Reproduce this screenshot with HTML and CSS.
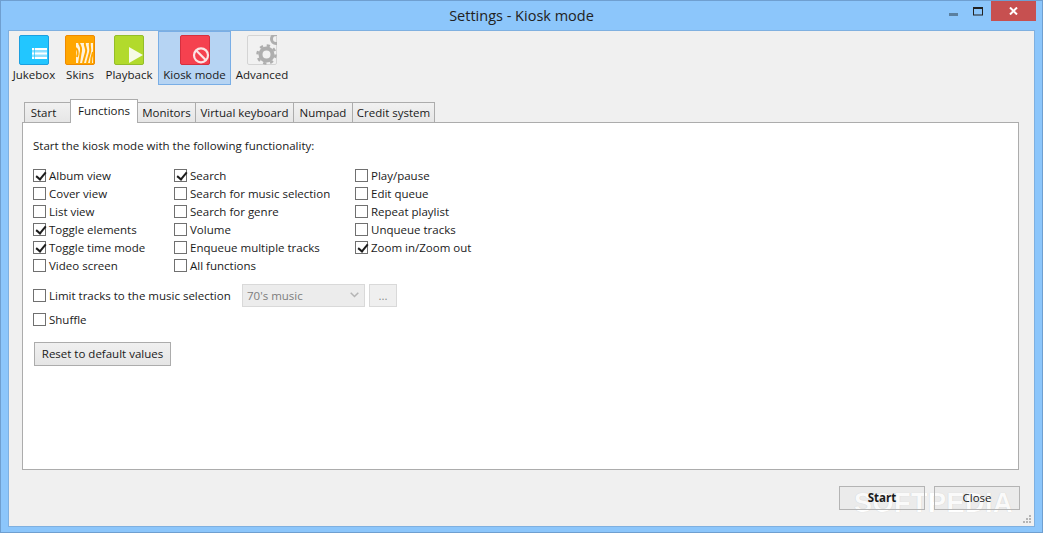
FILE: index.html
```html
<!DOCTYPE html>
<html lang="en">
<head>
<meta charset="utf-8">
<title>Settings - Kiosk mode</title>
<link rel="stylesheet" href="styles.css">
</head>
<body>
<div class="window">
  <header class="titlebar">
    <div class="title">Settings - Kiosk mode</div>
    <div class="controls">
      <svg class="ctl-min" width="9" height="3" viewBox="0 0 9 3"><rect width="9" height="3" fill="#5a7f9f"/></svg>
      <svg class="ctl-max" width="10" height="9" viewBox="0 0 10 9"><rect x=".5" y=".5" width="9" height="7.5" fill="none" stroke="#222"/><rect width="10" height="2" fill="#222"/></svg>
      <div class="ctl-close"><svg width="9" height="8" viewBox="0 0 9 8"><path d="M1 .5l7 7M8 .5l-7 7" stroke="#fff" stroke-width="2" fill="none"/></svg></div>
    </div>
  </header>
  <div class="client">
    <nav class="toolbar">
      <div class="tool t-jukebox">
        <svg class="icon" width="30" height="30" viewBox="0 0 30 30"><rect x=".5" y=".5" width="29" height="29" rx="1.500" fill="#22c6ff" stroke="#1b9fe0"/><rect x="13" y="13" width="15" height="11" fill="#8fe0ff"/><path d="M13 14h15M13 18.500h15M13 23h15" stroke="#fff" stroke-width="2"/><path d="M15.500 13v11" stroke="#22c6ff" stroke-width="1" opacity=".7"/></svg>
        <span>Jukebox</span>
      </div>
      <div class="tool t-skins">
        <svg class="icon" width="30" height="30" viewBox="0 0 30 30"><rect x=".5" y=".5" width="29" height="29" rx="1.500" fill="#ffa600" stroke="#ef8a00"/><rect x="11" y="8" width="17" height="20" fill="#fff3dc"/><path d="M14 8c1 3 3 4 2 8s-1 8-2 12M20 8c-1 3 2 5 1 9s-2 7-3 11M25 8c-1 3 1 5 0 9s-2 7-3 11M11 13c2 2 2 6 1 9M28 17c-1 3-2 7-2 11" fill="none" stroke="#ffa600" stroke-width="2"/></svg>
        <span>Skins</span>
      </div>
      <div class="tool t-playback">
        <svg class="icon" width="30" height="30" viewBox="0 0 30 30"><rect x=".5" y=".5" width="29" height="29" rx="1.500" fill="#b2da2c" stroke="#94bd2a"/><path d="M15 12l14 8-14 8z" fill="#f6fbe4"/></svg>
        <span>Playback</span>
      </div>
      <div class="tool t-kiosk">
        <svg class="icon" width="30" height="30" viewBox="0 0 30 30"><rect x=".5" y=".5" width="29" height="29" rx="1.500" fill="#f5414f" stroke="#d5303f"/><circle cx="21" cy="20.300" r="7" fill="none" stroke="#fbe4e4" stroke-width="2.200"/><path d="M16 15.300l10 10" stroke="#fbe4e4" stroke-width="2.200"/></svg>
        <span>Kiosk mode</span>
      </div>
      <div class="tool t-advanced">
        <svg class="icon" width="30" height="30" viewBox="0 0 30 30"><rect x=".5" y=".5" width="29" height="29" rx="1.500" fill="#f1f1f1" stroke="#d4d4d4"/><circle cx="19.500" cy="19.500" r="6" fill="none" stroke="#aeaeae" stroke-width="4"/><circle cx="19.500" cy="19.500" r="9" fill="none" stroke="#aeaeae" stroke-width="2.500" stroke-dasharray="3.300 3.760"/><circle cx="29" cy="4" r="4.500" fill="none" stroke="#aeaeae" stroke-width="3"/></svg>
        <span>Advanced</span>
      </div>
    </nav>
    <div class="tabs">
      <div class="tab tab-start">Start</div>
      <div class="tab tab-active">Functions</div>
      <div class="tab tab-monitors">Monitors</div>
      <div class="tab tab-vk">Virtual keyboard</div>
      <div class="tab tab-numpad">Numpad</div>
      <div class="tab tab-credit">Credit system</div>
    </div>
    <main class="panel">
      <p class="intro">Start the kiosk mode with the following functionality:</p>
      <div class="options">
        <div class="col col-1">
          <label class="check"><i class="box on"></i>Album view</label>
          <label class="check"><i class="box"></i>Cover view</label>
          <label class="check"><i class="box"></i>List view</label>
          <label class="check"><i class="box on"></i>Toggle elements</label>
          <label class="check"><i class="box on"></i>Toggle time mode</label>
          <label class="check"><i class="box"></i>Video screen</label>
        </div>
        <div class="col col-2">
          <label class="check"><i class="box on"></i>Search</label>
          <label class="check"><i class="box"></i>Search for music selection</label>
          <label class="check"><i class="box"></i>Search for genre</label>
          <label class="check"><i class="box"></i>Volume</label>
          <label class="check"><i class="box"></i>Enqueue multiple tracks</label>
          <label class="check"><i class="box"></i>All functions</label>
        </div>
        <div class="col col-3">
          <label class="check"><i class="box"></i>Play/pause</label>
          <label class="check"><i class="box"></i>Edit queue</label>
          <label class="check"><i class="box"></i>Repeat playlist</label>
          <label class="check"><i class="box"></i>Unqueue tracks</label>
          <label class="check"><i class="box on"></i>Zoom in/Zoom out</label>
        </div>
      </div>
      <div class="limit">
        <label class="check limit-check"><i class="box"></i>Limit tracks to the music selection</label>
        <div class="combo"><span>70's music</span><svg width="9" height="6" viewBox="0 0 9 6"><path d="M.7.7l3.800 3.800L8.300.7" fill="none" stroke="#b4b4b4" stroke-width="1.500"/></svg></div>
        <div class="dots">...</div>
      </div>
      <label class="check shuffle"><i class="box"></i>Shuffle</label>
      <div class="btn reset">Reset to default values</div>
    </main>
    <footer class="footer">
      <div class="watermark">SOFTPEDIA</div>
      <div class="btn foot-btn start">Start</div>
      <div class="btn foot-btn">Close</div>
      <svg class="grip" width="9" height="9" viewBox="0 0 9 9"><path d="M6 0h2v2H6zM3 3h2v2H3zM6 3h2v2H6zM0 6h2v2H0zM3 6h2v2H3zM6 6h2v2H6z" fill="#b5b5b5"/></svg>
    </footer>
  </div>
</div>
</body>
</html>
```
FILE: styles.css
```css
* { box-sizing: border-box; }
html, body { margin: 0; height: 100%; overflow: hidden; }
body {
  font-family: "Open Sans", "Liberation Sans", sans-serif;
  font-size: 11.5px;
  color: #1a1a1a;
}
.window {
  width: 1043px;
  height: 533px;
  background: #8cc6fb;
  border: 1px solid #6f9fd0;
  display: flex;
  flex-direction: column;
  padding: 0 7px 5px;
}
.titlebar {
  height: 29px;
  position: relative;
  flex: none;
}
.title {
  text-align: center;
  font-size: 14.500px;
  line-height: 29px;
  color: #222;
}
.controls {
  position: absolute;
  right: -1px;
  top: 0;
  height: 20px;
  display: flex;
  align-items: flex-start;
}
.ctl-min { margin-top: 12px; margin-right: 15px; }
.ctl-max { margin-top: 6px; margin-right: 8px; }
.ctl-close {
  width: 45px;
  height: 20px;
  background: #c75050;
  display: flex;
  align-items: center;
  justify-content: center;
}
.client {
  flex: 1;
  background: #f0f0f0;
  border: 1px solid #7fb0e0;
  display: flex;
  flex-direction: column;
  min-height: 0;
}
.toolbar {
  display: flex;
  height: 54px;
  flex: none;
}
.tool {
  display: flex;
  flex-direction: column;
  align-items: center;
  padding-top: 4px;
  height: 54px;
  white-space: nowrap;
}
.tool span { margin-top: 1px; line-height: 17px; }
.tool .icon { display: block; }
.t-jukebox { margin-left: 3px; width: 44px; }
.t-skins { margin-left: 7px; width: 34px; }
.t-playback { margin-left: 7px; width: 50px; }
.t-kiosk { margin-left: 4px; width: 73px; background: #b6d4f3; border: 1px solid #79aee6; padding-top: 3px; }
.t-advanced { margin-left: 2px; width: 58px; }
.tabs {
  display: flex;
  align-items: flex-end;
  height: 38px;
  flex: none;
  padding-left: 15px;
  position: relative;
  z-index: 1;
  margin-bottom: -1px;
}
.tab {
  height: 21px;
  line-height: 20px;
  background: linear-gradient(#f1f1f1, #e6e6e6);
  border: 1px solid #acacac;
  border-left: 0;
  text-align: center;
}
.tab-start { width: 47px; border-left: 1px solid #acacac; padding-right: 8px; }
.tab-active {
  width: 68px;
  height: 24px;
  line-height: 21px;
  background: #fff;
  border-left: 1px solid #acacac;
  border-bottom: 0;
  margin-left: -1px;
}
.tab-monitors { width: 58px; }
.tab-vk { width: 98px; }
.tab-numpad { width: 59px; }
.tab-credit { width: 82px; }
.panel {
  margin: 0 15px 0 13px;
  height: 348px;
  flex: none;
  background: #fff;
  border: 1px solid #acacac;
  padding: 14px 10px 0;
}
.intro { margin: 0; line-height: 17px; }
.options {
  display: flex;
  margin-top: 12px;
}
.col { display: flex; flex-direction: column; }
.col-1 { width: 141px; }
.col-2 { width: 181px; }
.check {
  display: flex;
  align-items: center;
  height: 18px;
  white-space: nowrap;
}
.box {
  display: block;
  width: 13px;
  height: 13px;
  margin-right: 3px;
  border: 1px solid #707070;
  background: #fff;
  flex: none;
  position: relative;
}
.box.on::after {
  content: "";
  position: absolute;
  left: 3.500px;
  top: .5px;
  width: 4px;
  height: 8px;
  border: solid #1c1c1c;
  border-width: 0 2px 2px 0;
  transform: rotate(40deg);
}
.limit {
  display: flex;
  align-items: center;
  margin-top: 9px;
  height: 24px;
}
.limit-check { width: 209px; }
.combo {
  width: 123px;
  height: 23px;
  background: #ececec;
  border: 1px solid #d9d9d9;
  color: #7d7d7d;
  display: flex;
  align-items: center;
  justify-content: space-between;
  padding: 0 5px 0 4px;
}
.dots {
  width: 28px;
  height: 23px;
  margin-left: 4px;
  background: #efefef;
  border: 1px solid #d9d9d9;
  color: #8a8a8a;
  text-align: center;
  line-height: 22px;
}
.shuffle { margin-top: 3px; }
.btn {
  border: 1px solid #acacac;
  background: linear-gradient(#f0f0f0, #e5e5e5);
  text-align: center;
}
.reset {
  width: 137px;
  height: 24px;
  line-height: 22px;
  margin: 14px 0 0 1px;
}
.footer {
  flex: 1;
  display: flex;
  justify-content: flex-end;
  align-items: flex-start;
  gap: 9px;
  padding: 16px 14px 0 0;
  position: relative;
}
.foot-btn {
  width: 86px;
  height: 24px;
  line-height: 22px;
  background: rgba(0, 0, 0, .02);
  border-color: #b4b4b4;
  position: relative;
  z-index: 1;
}
.start { font-weight: 700; }
.watermark {
  position: absolute;
  left: 845px;
  top: 20px;
  font-family: "Liberation Sans", sans-serif;
  font-weight: 700;
  font-size: 27px;
  line-height: 27px;
  letter-spacing: 0.500px;
  color: #fff;
  text-shadow: 0 0 1px rgba(0, 0, 0, .15);
  white-space: nowrap;
}
.grip {
  position: absolute;
  right: 2px;
  bottom: 2px;
}
```
